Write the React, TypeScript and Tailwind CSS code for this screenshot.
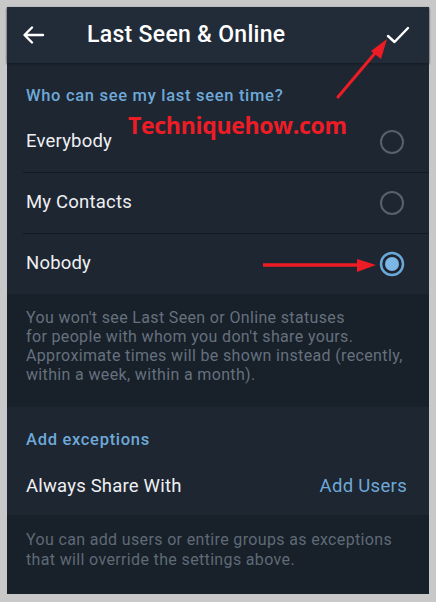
import React from "react";

const Radio: React.FC<{ checked?: boolean }> = ({ checked }) => (
  <svg width="26" height="26" viewBox="0 0 26 26">
    {checked ? (
      <>
        <circle cx="13" cy="13" r="11" fill="none" stroke="#6aa8da" strokeWidth="2.5" />
        <circle cx="13" cy="13" r="7" fill="#7cb7e6" />
      </>
    ) : (
      <circle cx="13" cy="13" r="11" fill="none" stroke="#59616b" strokeWidth="2" />
    )}
  </svg>
);

const options = [
  { label: "Everybody", checked: false },
  { label: "My Contacts", checked: false },
  { label: "Nobody", checked: true },
];

export default function App() {
  return (
    <div className="relative h-[602px] w-[436px] bg-[#c8c8c8] pt-[7px] pl-[7px] pr-[7px] font-['Roboto',sans-serif]">
      <div className="flex flex-col w-[422px] h-[587px] bg-[#18202a]">
        {/* Header */}
        <div className="relative flex items-center h-[56px] bg-[#222c39] shadow-[0_1px_2px_#151b23]">
          <svg width="24" height="24" viewBox="0 0 24 24" className="ml-[15px]">
            <path d="M21 12H3M10 4.5L2.5 12L10 19.5" fill="none" stroke="#ffffff" strokeWidth="2.4" strokeLinecap="round" strokeLinejoin="round" />
          </svg>
          <span className="ml-[41px] text-[23px] font-medium text-white tracking-[0.3px]">Last Seen &amp; Online</span>
          <svg width="26" height="22" viewBox="0 0 26 22" className="ml-auto mr-[18px]">
            <path d="M3 12L9.5 18L23 4" fill="none" stroke="#ffffff" strokeWidth="2.4" strokeLinecap="round" strokeLinejoin="round" />
          </svg>
        </div>

        {/* Who can see */}
        <div className="bg-[#1e2632]">
          <div className="pt-[21px] pl-[19px] h-[49px] text-[16.5px] tracking-[0.7px] font-medium text-[#6ea9d8]">
            Who can see my last seen time?
          </div>
          {options.map((o, i) => (
            <div key={o.label} className="pl-[16px]">
              <div
                className={
                  "flex items-center justify-between pl-[3px] pr-[24px] " +
                  (i < options.length - 1 ? "border-b border-[#141a22] h-[61px]" : "h-[60px]")
                }
              >
                <span className="text-[18.5px] tracking-[0.2px] text-[#eef0f3]">{o.label}</span>
                <Radio checked={o.checked} />
              </div>
            </div>
          ))}
        </div>

        <div className="px-[19px] pt-[14px] pb-[23px] text-[16px] tracking-[0.35px] leading-[19px] text-[#66717d]">
          You won't see Last Seen or Online statuses
          <br />
          for people with whom you don't share yours.
          <br />
          Approximate times will be shown instead (recently,
          <br />
          within a week, within a month).
        </div>

        {/* Exceptions */}
        <div className="bg-[#1e2632]">
          <div className="pt-[21px] pl-[19px] h-[52px] text-[16.5px] tracking-[0.7px] font-medium text-[#6ea9d8]">Add exceptions</div>
          <div className="flex items-center justify-between h-[56px] pl-[19px] pr-[22px]">
            <span className="text-[18.5px] tracking-[0.2px] text-[#eef0f3]">Always Share With</span>
            <span className="text-[18.5px] tracking-[0.3px] text-[#6ea9d8]">Add Users</span>
          </div>
        </div>

        <div className="px-[19px] pt-[15px] text-[16px] tracking-[0.35px] leading-[20px] text-[#5f6a75]">
          You can add users or entire groups as exceptions
          <br />
          that will override the settings above.
        </div>
      </div>

      {/* Watermark */}
      <div className="absolute left-[128px] top-[110px] text-[23px] leading-[30px] font-bold text-[#ee1c25] font-['Open_Sans',sans-serif] tracking-[-0.3px]">
        Techniquehow.com
      </div>

      {/* Annotation arrows */}
      <svg className="absolute left-0 top-0 pointer-events-none" width="436" height="602" viewBox="0 0 436 602">
        <line x1="338" y1="97" x2="376" y2="52" stroke="#ee1c25" strokeWidth="3" strokeLinecap="round" />
        <polygon points="387,39 371,51 381,59" fill="#ee1c25" />
        <line x1="263" y1="265" x2="360" y2="265" stroke="#ee1c25" strokeWidth="3.5" />
        <polygon points="376,265 357,259 357,272" fill="#ee1c25" />
      </svg>
    </div>
  );
}
